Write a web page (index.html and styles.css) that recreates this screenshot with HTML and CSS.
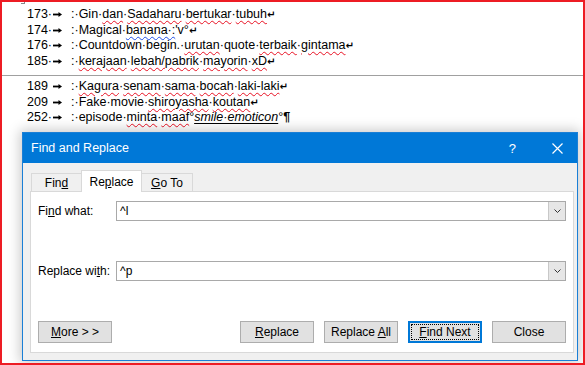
FILE: index.html
```html
<!DOCTYPE html>
<html lang="en">
<head>
  <meta charset="UTF-8">
  <title>Find and Replace</title>
  <link rel="stylesheet" href="styles.css">
</head>
<body>
  <div class="screen">
    <div class="doc">
      <div class="block">
        <p class="line"><span class="no">173·</span><span class="tab"><svg width="9" height="5" viewBox="0 0 9 5"><rect x="0" y="1.6" width="6" height="1.8" fill="#000"/><path d="M5.5 0 L9 2.5 L5.5 5 Z" fill="#000"/></svg></span>:·Gin·<span class="sp">dan</span>·<span class="sp">Sadaharu</span>·<span class="sp">bertukar</span>·<span class="sp">tubuh</span><span class="br">↵</span></p>
        <p class="line"><span class="no">174·</span><span class="tab"><svg width="9" height="5" viewBox="0 0 9 5"><rect x="0" y="1.6" width="6" height="1.8" fill="#000"/><path d="M5.5 0 L9 2.5 L5.5 5 Z" fill="#000"/></svg></span>:·Magical·<span class="gr">banana·:</span>'v°<span class="br">↵</span></p>
        <p class="line"><span class="no">176·</span><span class="tab"><svg width="9" height="5" viewBox="0 0 9 5"><rect x="0" y="1.6" width="6" height="1.8" fill="#000"/><path d="M5.5 0 L9 2.5 L5.5 5 Z" fill="#000"/></svg></span>:·Countdown·begin.·<span class="sp">urutan</span>·quote·<span class="sp">terbaik</span>·<span class="sp">gintama</span><span class="br">↵</span></p>
        <p class="line"><span class="no">185·</span><span class="tab"><svg width="9" height="5" viewBox="0 0 9 5"><rect x="0" y="1.6" width="6" height="1.8" fill="#000"/><path d="M5.5 0 L9 2.5 L5.5 5 Z" fill="#000"/></svg></span>:·<span class="sp">kerajaan</span>·<span class="sp">lebah/pabrik</span>·<span class="sp">mayorin</span>·<span class="sp">xD</span><span class="br">↵</span></p>
      </div>
      <div class="block second">
        <p class="line"><span class="no">189</span><span class="tab"><svg width="9" height="5" viewBox="0 0 9 5"><rect x="0" y="1.6" width="6" height="1.8" fill="#000"/><path d="M5.5 0 L9 2.5 L5.5 5 Z" fill="#000"/></svg></span>:·<span class="sp">Kagura</span>·<span class="sp">senam</span>·<span class="sp">sama</span>·<span class="sp">bocah</span>·<span class="sp">laki-laki</span><span class="br">↵</span></p>
        <p class="line"><span class="no">209</span><span class="tab"><svg width="9" height="5" viewBox="0 0 9 5"><rect x="0" y="1.6" width="6" height="1.8" fill="#000"/><path d="M5.5 0 L9 2.5 L5.5 5 Z" fill="#000"/></svg></span>:·Fake·movie·<span class="sp">shiroyasha</span>·<span class="sp">koutan</span><span class="br">↵</span></p>
        <p class="line"><span class="no">252·</span><span class="tab"><svg width="9" height="5" viewBox="0 0 9 5"><rect x="0" y="1.6" width="6" height="1.8" fill="#000"/><path d="M5.5 0 L9 2.5 L5.5 5 Z" fill="#000"/></svg></span>:·episode·<span class="sp">minta</span>·<span class="sp">maaf</span>°<span class="emo">smile·emoticon</span>°<span class="pil">¶</span></p>
      </div>
    </div>

    <div class="dialog">
      <div class="titlebar">
        <span class="title">Find and Replace</span>
        <span class="help">?</span>
        <svg class="x" width="11" height="11" viewBox="0 0 11 11"><path d="M0.5 0.5 L10.5 10.5 M10.5 0.5 L0.5 10.5" stroke="#fff" stroke-width="1.2"/></svg>
      </div>
      <div class="dbody">
        <div class="tabs">
          <span class="tabbtn">Fin<u>d</u></span>
          <span class="tabbtn active">Re<u>p</u>lace</span>
          <span class="tabbtn"><u>G</u>o To</span>
        </div>
        <div class="panel">
          <div class="field">
            <span class="label">Fi<u>n</u>d what:</span>
            <div class="combo"><span class="val">^l</span><span class="drop"><svg width="7" height="4" viewBox="0 0 7 4"><path d="M0.5 0.5 L3.5 3.5 L6.5 0.5" fill="none" stroke="#333" stroke-width="1"/></svg></span></div>
          </div>
          <div class="field">
            <span class="label">Replace wi<u>t</u>h:</span>
            <div class="combo"><span class="val">^p</span><span class="drop"><svg width="7" height="4" viewBox="0 0 7 4"><path d="M0.5 0.5 L3.5 3.5 L6.5 0.5" fill="none" stroke="#333" stroke-width="1"/></svg></span></div>
          </div>
          <div class="buttons">
            <button class="btn"><u>M</u>ore &gt; &gt;</button>
            <span class="spacer"></span>
            <button class="btn"><u>R</u>eplace</button>
            <button class="btn">Replace <u>A</u>ll</button>
            <button class="btn default"><span class="focus"><u>F</u>ind Next</span></button>
            <button class="btn">Close</button>
          </div>
        </div>
      </div>
    </div>
  </div>
</body>
</html>
```

FILE: styles.css
```css
html, body{
  margin: 0;
  padding: 0;
}
.screen{
  position: relative;
  width: 585px;
  height: 365px;
  box-sizing: border-box;
  border: 2px solid #ed1c24;
  border-right-width: 2px;
  background: #fff;
  overflow: hidden;
}
/* document text */
.doc{
  font-family: "Liberation Sans", Arial, sans-serif;
  font-size: 12.5px;
  color: #000;
}
.doc::before{
  content: "";
  position: absolute;
  left: 19px;
  top: -2px;
  width: 3px;
  height: 3px;
  border-right: 1px solid #888;
  border-bottom: 1px solid #888;
}
.block{
  padding: 5px 0 0 25px;
}
.block.second{
  margin-top: 6px;
  padding-top: 3px;
  border-top: 1px solid #a0a0a0;
}
.line{
  margin: 0;
  line-height: 15.5px;
  white-space: nowrap;
}
.no{
  display: inline-block;
  width: 26px;
}
.tab{
  display: inline-block;
  width: 18px;
}
.tab svg{
  display: inline-block;
  vertical-align: 1px;
}
.sp{
  text-decoration: underline wavy #e81123;
  text-decoration-thickness: 1px;
  text-underline-offset: 2px;
}
.gr{
  text-decoration: underline wavy #1f4ee8;
  text-decoration-thickness: 1px;
  text-underline-offset: 2px;
}
.emo{
  font-style: italic;
  text-decoration: underline;
  text-underline-offset: 2px;
}
.br{
  font-family: "DejaVu Sans", sans-serif;
  font-size: 10px;
  font-weight: bold;
}
.pil{
  font-weight: bold;
}
/* dialog window */
.dialog{
  position: absolute;
  left: 20px;
  top: 130px;
  width: 556px;
  height: 229px;
  box-sizing: border-box;
  border: 1px solid #1a7fd6;
  background: #f0f0f0;
  box-shadow: 0 0 12px 2px rgba(0,0,0,0.22);
  display: flex;
  flex-direction: column;
  font-family: "Liberation Sans", Arial, sans-serif;
  font-size: 12px;
  color: #000;
}
.titlebar{
  height: 30px;
  background: #0078d7;
  color: #fff;
  display: flex;
  align-items: center;
  padding: 0 0 0 8px;
}
.title{
  flex: 1;
  font-size: 12.5px;
}
.help{
  font-size: 13px;
  margin-right: 36px;
}
.x{
  margin-right: 14px;
}
.dbody{
  flex: 1;
  display: flex;
  flex-direction: column;
  padding: 7px 3px 7px 7px;
}
.tabs{
  display: flex;
  align-items: flex-end;
  height: 21px;
  padding-left: 1px;
  position: relative;
  z-index: 1;
}
.tabbtn{
  height: 18px;
  box-sizing: border-box;
  border: 1px solid #d9d9d9;
  border-bottom: none;
  background: #f0f0f0;
  display: flex;
  align-items: center;
  justify-content: center;
  width: 50px;
  padding-top: 1px;
}
.tabbtn.active{
  height: 22px;
  width: 61px;
  background: #fff;
  margin-bottom: -1px;
  border-bottom: none;
  padding-top: 0;
}
.tabbtn:last-child{
  width: 51px;
  border-left: none;
}
.tabbtn:first-child{
  border-right: none;
}
.panel{
  flex: 1;
  background: #fff;
  border: 1px solid #d9d9d9;
  padding: 9px 7px 8px 7px;
  display: flex;
  flex-direction: column;
  gap: 40px;
}
.field{
  display: flex;
  align-items: center;
  height: 20px;
}
.label{
  width: 78px;
}
.combo{
  flex: 1;
  height: 20px;
  box-sizing: border-box;
  border: 1px solid #a9a9a9;
  display: flex;
  align-items: center;
}
.val{
  flex: 1;
  padding-left: 3px;
}
.drop{
  width: 17px;
  height: 18px;
  box-sizing: border-box;
  background: #e6e6e6;
  border-left: 1px solid #c8c8c8;
  display: flex;
  align-items: center;
  justify-content: center;
}
.buttons{
  display: flex;
  gap: 10px;
  height: 22px;
}
.spacer{
  flex: 1;
}
.btn{
  width: 74px;
  height: 22px;
  box-sizing: border-box;
  background: #e1e1e1;
  border: 1px solid #adadad;
  border-radius: 0;
  padding: 0;
  font: inherit;
  color: #000;
}
.btn.default{
  border: 2px solid #0078d7;
  display: flex;
  align-items: center;
  justify-content: center;
}
.focus{
  display: flex;
  align-items: center;
  justify-content: center;
  width: 66px;
  height: 14px;
  outline: 1px dotted #000;
}
```
